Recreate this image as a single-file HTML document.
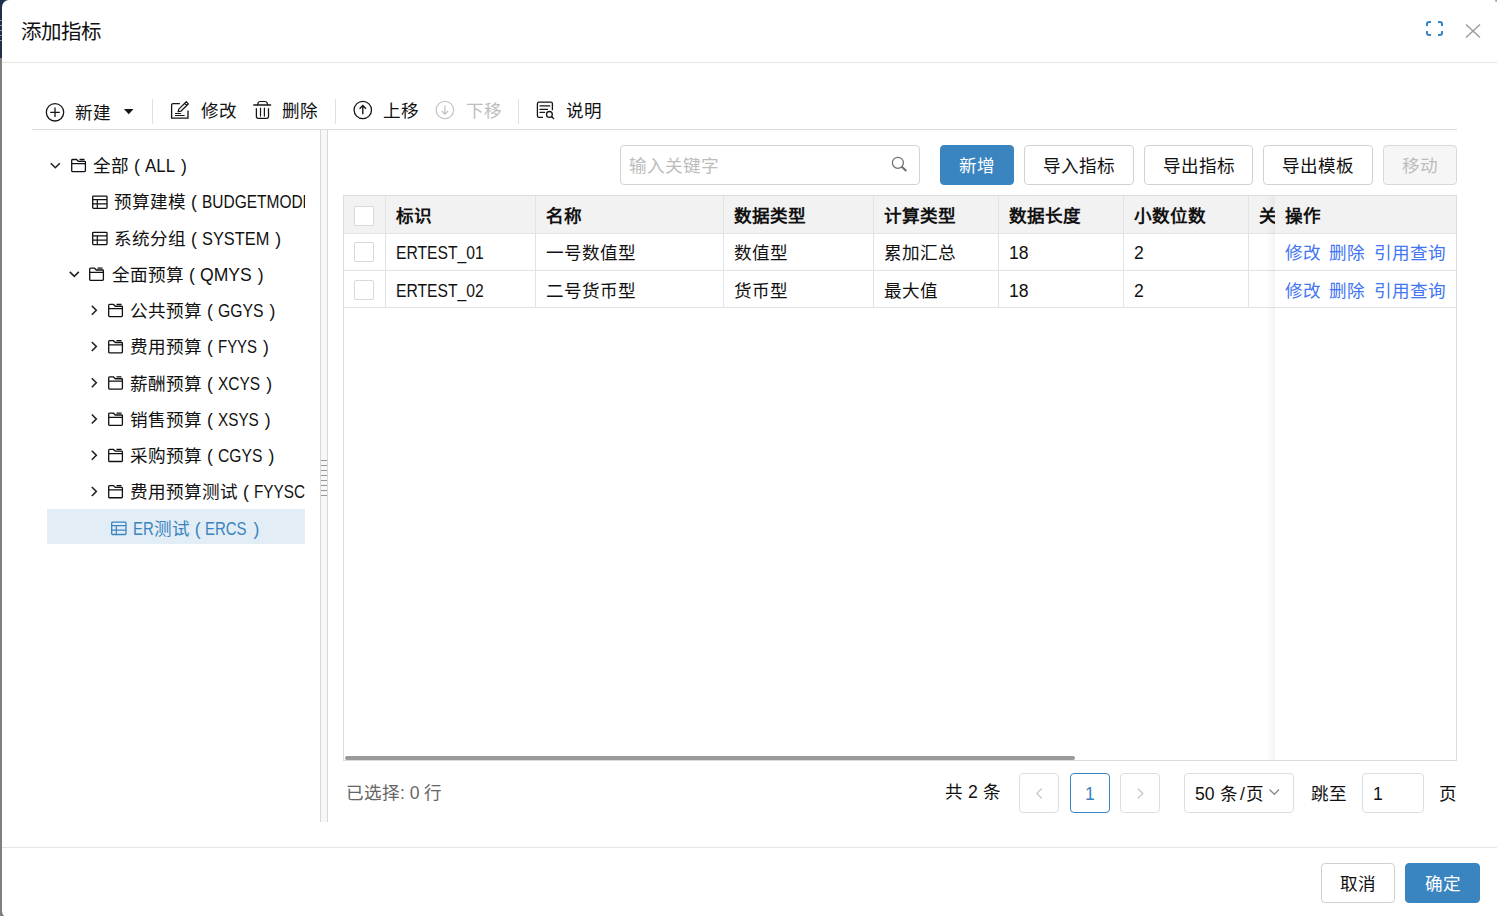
<!DOCTYPE html>
<html lang="zh-CN">
<head>
<meta charset="utf-8">
<style>
*{box-sizing:border-box;margin:0;padding:0}
html,body{width:1497px;height:916px;overflow:hidden;background:#7f7f7f}
body{font-family:"Liberation Sans",sans-serif;font-size:17.6px;color:#111;position:relative}
.abs{position:absolute}
.t{position:absolute;white-space:nowrap;line-height:20px}
.hline{position:absolute;height:1px;background:#e5e5e5}
.vline{position:absolute;width:1px;background:#e0e0e0}
.btn{position:absolute;border:1px solid #d2d2d2;border-radius:4px;background:#fff;text-align:center;line-height:38px;height:40px;padding-top:1px}
.primary{background:#3a84c0;border-color:#3a84c0;color:#fff}
#ov{position:absolute;left:0;top:0;overflow:visible}
.link{color:#4275f3}
.L{display:inline-block;transform-origin:0 0}
</style>
</head>
<body>
<div class="abs" style="left:0;top:0;width:1497px;height:58px;background:#1e2f4b"></div>
<div class="abs" style="left:0;top:20px;width:2px;height:1px;background:#8a8f98"></div>
<div class="abs" style="left:0;top:25px;width:2px;height:1px;background:#8a8f98"></div>
<div class="abs" style="left:0;top:30px;width:2px;height:1px;background:#8a8f98"></div>
<div class="abs" style="left:0;top:35px;width:2px;height:1px;background:#8a8f98"></div>
<div class="abs" style="left:0;top:40px;width:2px;height:1px;background:#8a8f98"></div>
<div class="abs" style="left:1494px;top:0;width:3px;height:3px;background:#1e2f4b"></div>
<div class="abs" style="left:2px;top:0;width:1520px;height:918px;background:#fff;border-top-left-radius:7px;border-bottom-left-radius:7px"></div>
<div class="abs" style="left:1495px;top:0;width:2px;height:1.5px;background:#a5abb5;border-bottom-left-radius:1.5px"></div>
<div class="t" style="left:21px;top:20.5px;font-size:20.5px;line-height:22px">添加指标</div>
<div class="hline" style="left:2px;top:62px;width:1495px"></div>
<div class="t" style="left:75px;top:103px">新建</div>
<div class="vline" style="left:152px;top:99px;height:25px"></div>
<div class="t" style="left:201px;top:101px">修改</div>
<div class="t" style="left:282px;top:101px">删除</div>
<div class="vline" style="left:335px;top:99px;height:25px"></div>
<div class="t" style="left:383px;top:101px">上移</div>
<div class="t" style="left:466px;top:101px;color:#bdbdbd">下移</div>
<div class="vline" style="left:518px;top:99px;height:25px"></div>
<div class="t" style="left:566px;top:101px">说明</div>
<div class="hline" style="left:32px;top:129px;width:1425px;background:#dcdcdc"></div>
<div class="abs" style="left:320px;top:130px;width:8px;height:692px;background:#f7f7f7;border-left:1px solid #d8d8d8;border-right:1px solid #d8d8d8"></div>
<div class="abs" style="left:321px;top:460px;width:6px;height:1px;background:#9097a3"></div>
<div class="abs" style="left:321px;top:465px;width:6px;height:1px;background:#9097a3"></div>
<div class="abs" style="left:321px;top:470px;width:6px;height:1px;background:#9097a3"></div>
<div class="abs" style="left:321px;top:475px;width:6px;height:1px;background:#9097a3"></div>
<div class="abs" style="left:321px;top:480px;width:6px;height:1px;background:#9097a3"></div>
<div class="abs" style="left:321px;top:485px;width:6px;height:1px;background:#9097a3"></div>
<div class="abs" style="left:321px;top:490px;width:6px;height:1px;background:#9097a3"></div>
<div class="abs" style="left:321px;top:495px;width:6px;height:1px;background:#9097a3"></div>
<div class="abs" style="left:0;top:130px;width:305px;height:700px;overflow:hidden">
<div class="t" style="left:93px;top:18.20px;line-height:36.24px;color:#111">全部 ( <span class="L" style="font-size:18.4px;transform:scaleX(0.9183);margin-right:-1.18px">ALL</span> )</div>
<div class="t" style="left:114px;top:54.44px;line-height:36.24px;color:#111">预算建模 ( <span class="L" style="font-size:18.4px;transform:scaleX(0.8417);margin-right:-20.99px">BUDGETMODEL</span> )</div>
<div class="t" style="left:114px;top:90.68px;line-height:36.24px;color:#111">系统分组 ( <span class="L" style="font-size:18.4px;transform:scaleX(0.8896);margin-right:-6.86px">SYSTEM</span> )</div>
<div class="t" style="left:112px;top:126.92px;line-height:36.24px;color:#111">全面预算 ( <span class="L" style="font-size:18.4px;transform:scaleX(0.9565);margin-right:-0.86px">QMYS</span> )</div>
<div class="t" style="left:130px;top:163.16px;line-height:36.24px;color:#111">公共预算 ( <span class="L" style="font-size:18.4px;transform:scaleX(0.8570);margin-right:-6.10px">GGYS</span> )</div>
<div class="t" style="left:130px;top:199.40px;line-height:36.24px;color:#111">费用预算 ( <span class="L" style="font-size:18.4px;transform:scaleX(0.8130);margin-right:-7.48px">FYYS</span> )</div>
<div class="t" style="left:130px;top:235.64px;line-height:36.24px;color:#111">薪酬预算 ( <span class="L" style="font-size:18.4px;transform:scaleX(0.8417);margin-right:-6.43px">XCYS</span> )</div>
<div class="t" style="left:130px;top:271.88px;line-height:36.24px;color:#111">销售预算 ( <span class="L" style="font-size:18.4px;transform:scaleX(0.8322);margin-right:-6.74px">XSYS</span> )</div>
<div class="t" style="left:130px;top:308.12px;line-height:36.24px;color:#111">采购预算 ( <span class="L" style="font-size:18.4px;transform:scaleX(0.8513);margin-right:-6.25px">CGYS</span> )</div>
<div class="t" style="left:130px;top:344.36px;line-height:36.24px;color:#111">费用预算测试 ( <span class="L" style="font-size:18.4px;transform:scaleX(0.8322);margin-right:-10.86px">FYYSCS</span> )</div>
<div class="abs" style="left:47px;top:378.5px;width:258px;height:35.5px;background:#e3edf6"></div>
<div class="t" style="left:133px;top:380.60px;line-height:36.24px;color:#3a84c0"><span class="L" style="font-size:18.4px;transform:scaleX(0.8130);margin-right:-4.78px">ER</span>测试 ( <span class="L" style="font-size:18.4px;transform:scaleX(0.8130);margin-right:-8.06px">ERCS</span> )</div>
</div>
<div class="abs" style="left:620px;top:145px;width:300px;height:40px;border:1px solid #d4d4d4;border-radius:4px"></div>
<div class="t" style="left:629px;top:156px;color:#bcbcbc">输入关键字</div>
<div class="btn primary" style="left:940px;top:145px;width:74px">新增</div>
<div class="btn" style="left:1024px;top:145px;width:110px">导入指标</div>
<div class="btn" style="left:1144px;top:145px;width:109px">导出指标</div>
<div class="btn" style="left:1263px;top:145px;width:110px">导出模板</div>
<div class="btn" style="left:1383px;top:145px;width:74px;background:#f6f6f6;color:#bdbdbd;border-color:#d9d9d9">移动</div>
<div class="abs" style="left:343px;top:195px;width:1114px;height:566px;border:1px solid #dcdcdc"></div>
<div class="abs" style="left:344px;top:196px;width:1112px;height:37px;background:#f2f2f2"></div>
<div class="hline" style="left:344px;top:232.5px;width:1112px;background:#e3e3e3"></div>
<div class="hline" style="left:344px;top:270.3px;width:1112px;background:#e3e3e3"></div>
<div class="hline" style="left:344px;top:307.3px;width:1112px;background:#e3e3e3"></div>
<div class="vline" style="left:385px;top:196px;height:111.5px;background:#e3e3e3"></div>
<div class="vline" style="left:535px;top:196px;height:111.5px;background:#e3e3e3"></div>
<div class="vline" style="left:723px;top:196px;height:111.5px;background:#e3e3e3"></div>
<div class="vline" style="left:873px;top:196px;height:111.5px;background:#e3e3e3"></div>
<div class="vline" style="left:998px;top:196px;height:111.5px;background:#e3e3e3"></div>
<div class="vline" style="left:1123px;top:196px;height:111.5px;background:#e3e3e3"></div>
<div class="vline" style="left:1248px;top:196px;height:111.5px;background:#e3e3e3"></div>
<div class="abs" style="left:354px;top:206px;width:20px;height:20px;border:1px solid #d9d9d9;border-radius:2px;background:#fff"></div>
<div class="abs" style="left:354px;top:242px;width:20px;height:20px;border:1px solid #d9d9d9;border-radius:2px;background:#fff"></div>
<div class="abs" style="left:354px;top:279.5px;width:20px;height:20px;border:1px solid #d9d9d9;border-radius:2px;background:#fff"></div>
<div class="t" style="left:396px;top:205.5px;font-weight:bold">标识</div>
<div class="t" style="left:546px;top:205.5px;font-weight:bold">名称</div>
<div class="t" style="left:734px;top:205.5px;font-weight:bold">数据类型</div>
<div class="t" style="left:884px;top:205.5px;font-weight:bold">计算类型</div>
<div class="t" style="left:1009px;top:205.5px;font-weight:bold">数据长度</div>
<div class="t" style="left:1134px;top:205.5px;font-weight:bold">小数位数</div>
<div class="t" style="left:1259px;top:205.5px;font-weight:bold">关</div>
<div class="t" style="left:396px;top:243px"><span class="L" style="font-size:18.4px;transform:scaleX(0.8513);margin-right:-15.31px">ERTEST_01</span></div>
<div class="t" style="left:546px;top:243px">一号数值型</div>
<div class="t" style="left:734px;top:243px">数值型</div>
<div class="t" style="left:884px;top:243px">累加汇总</div>
<div class="t" style="left:1009px;top:243px">18</div>
<div class="t" style="left:1134px;top:243px">2</div>
<div class="t" style="left:396px;top:281px"><span class="L" style="font-size:18.4px;transform:scaleX(0.8513);margin-right:-15.31px">ERTEST_02</span></div>
<div class="t" style="left:546px;top:281px">二号货币型</div>
<div class="t" style="left:734px;top:281px">货币型</div>
<div class="t" style="left:884px;top:281px">最大值</div>
<div class="t" style="left:1009px;top:281px">18</div>
<div class="t" style="left:1134px;top:281px">2</div>
<div class="abs" style="left:1266px;top:196px;width:9px;height:564px;background:linear-gradient(to right,rgba(0,0,0,0),rgba(0,0,0,0.045))"></div>
<div class="abs" style="left:1275px;top:196px;width:181px;height:564px;background:#fff"></div>
<div class="abs" style="left:1275px;top:196px;width:181px;height:37px;background:#f2f2f2"></div>
<div class="hline" style="left:1275px;top:232.5px;width:181px;background:#e3e3e3"></div>
<div class="hline" style="left:1275px;top:270.3px;width:181px;background:#e3e3e3"></div>
<div class="hline" style="left:1275px;top:307.3px;width:181px;background:#e3e3e3"></div>
<div class="t" style="left:1285px;top:205.5px;font-weight:bold">操作</div>
<div class="t link" style="left:1285px;top:243px">修改</div>
<div class="t link" style="left:1328.5px;top:243px">删除</div>
<div class="t link" style="left:1373.7px;top:243px">引用查询</div>
<div class="t link" style="left:1285px;top:281px">修改</div>
<div class="t link" style="left:1328.5px;top:281px">删除</div>
<div class="t link" style="left:1373.7px;top:281px">引用查询</div>
<div class="abs" style="left:345px;top:755.5px;width:730px;height:4.5px;background:#9a9a9a;border-radius:2px"></div>
<div class="t" style="left:346px;top:783px;color:#666">已选择: 0 行</div>
<div class="t" style="left:945px;top:782px">共 2 条</div>
<div class="btn" style="left:1019px;top:773px;width:40px;height:40px;border-color:#dedede"></div>
<div class="btn" style="left:1070px;top:773px;width:40px;height:40px;border-color:#3a84c0;color:#3a84c0">1</div>
<div class="btn" style="left:1120px;top:773px;width:40px;height:40px;border-color:#dedede"></div>
<div class="btn" style="left:1184px;top:773px;width:110px;height:40px;border-color:#dedede"></div>
<div class="t" style="left:1195px;top:784px">50<span style="margin-left:1px"> </span>条<span style="margin:0 1.5px">/</span>页</div>
<div class="t" style="left:1311px;top:784px">跳至</div>
<div class="btn" style="left:1362px;top:773px;width:62px;height:40px;border-color:#dedede"></div>
<div class="t" style="left:1373px;top:784px">1</div>
<div class="t" style="left:1439px;top:784px">页</div>
<div class="hline" style="left:2px;top:847px;width:1495px"></div>
<div class="btn" style="left:1321px;top:863px;width:74px;height:40px;border-color:#cfcfcf">取消</div>
<div class="btn primary" style="left:1405px;top:863px;width:75px;height:40px">确定</div>
<svg id="ov" width="1497" height="916" viewBox="0 0 1497 916">
<path d="M1427 26V24a2 2 0 0 1 2-2h2 M1438 22h2a2 2 0 0 1 2 2v2 M1442 31v2a2 2 0 0 1-2 2h-2 M1431 35h-2a2 2 0 0 1-2-2v-2" fill="none" stroke="#3584c4" stroke-width="2"/>
<path d="M1466 24.5L1480 37.5 M1480 24.5L1466 37.5" stroke="#9c9c9c" stroke-width="1.5" fill="none"/>
<circle cx="55" cy="112.3" r="8.7" fill="none" stroke="#161616" stroke-width="1.3"/><path d="M55 107.5v9.6 M50.2 112.3h9.6" stroke="#161616" stroke-width="1.3"/>
<path d="M124 109h9.5l-4.75 5.2z" fill="#161616"/>
<path d="M179.9 103.6H173a1.4 1.4 0 0 0-1.4 1.4V118.2H188V110.6" fill="none" stroke="#161616" stroke-width="1.3"/>
<path d="M178.1 111.6l0.7-2.5 7.5-7.4 2.1 2.1-7.5 7.4z M184.6 103.4l2 2" fill="none" stroke="#161616" stroke-width="1.2" stroke-linejoin="round"/>
<path d="M175 113.5h6 M175 115.5h9.6" stroke="#161616" stroke-width="1.2"/>
<path d="M253.3 105h17.8" stroke="#161616" stroke-width="1.5"/>
<path d="M257.4 105l0.8-2.2a2 2 0 0 1 1.8-1.3h5.2a2 2 0 0 1 1.8 1.3l0.8 2.2" fill="none" stroke="#161616" stroke-width="1.2"/>
<path d="M256.4 108.2v8.5a1.6 1.6 0 0 0 1.6 1.6h8.9a1.6 1.6 0 0 0 1.6-1.6V108.2" fill="none" stroke="#161616" stroke-width="1.3"/>
<path d="M260.5 108.2v7.9 M264.4 108.2v7.9" stroke="#161616" stroke-width="1.2" stroke-linecap="round"/>
<circle cx="362.8" cy="110" r="8.7" fill="none" stroke="#161616" stroke-width="1.3"/><path d="M362.8 105.4v8.8 M359.6 108.8l3.2-3.3 3.2 3.3" fill="none" stroke="#161616" stroke-width="1.4"/>
<circle cx="444.9" cy="110" r="8.7" fill="none" stroke="#c6c6c6" stroke-width="1.3"/><path d="M444.9 105.4v8.8 M441.7 110.9l3.2 3.3 3.2-3.3" fill="none" stroke="#c6c6c6" stroke-width="1.4"/>
<path d="M543 117.3H539a1.6 1.6 0 0 1-1.6-1.6V103.7a1.6 1.6 0 0 1 1.6-1.6h11.8a1.6 1.6 0 0 1 1.6 1.6v6.6" fill="none" stroke="#161616" stroke-width="1.3"/>
<path d="M540 105.9h9.7 M540 109.4h7.5 M540 112.4h4.6" stroke="#161616" stroke-width="1.2" stroke-linecap="round"/>
<circle cx="549.4" cy="114.4" r="2.9" fill="none" stroke="#161616" stroke-width="1.3"/><path d="M551.5 116.5l2.1 2" stroke="#161616" stroke-width="1.3" stroke-linecap="round"/>
<path d="M50.8 163.2l4.5 4.5 4.5-4.5" fill="none" stroke="#222" stroke-width="1.6"/>
<path transform="translate(71,158.80)" d="M0.7 12V1.5c0-.5.4-.8.8-.8h4l1.8 1.8h6.3c.5 0 .8.4.8.8V12c0 .5-.4.8-.8.8H1.5c-.5 0-.8-.4-.8-.8z M0.7 4.9h13.7 M8.5 0.7h5" fill="none" stroke="#111" stroke-width="1.3"/>
<g transform="translate(92,195.34)"><rect x="0.7" y="0.7" width="14.3" height="12.3" rx="0.8" fill="none" stroke="#111" stroke-width="1.3"/><path d="M0.7 4.2h14.3 M0.7 8.6h14.3 M5.3 4.2v8.8" fill="none" stroke="#111" stroke-width="1.2"/></g>
<g transform="translate(92,231.58)"><rect x="0.7" y="0.7" width="14.3" height="12.3" rx="0.8" fill="none" stroke="#111" stroke-width="1.3"/><path d="M0.7 4.2h14.3 M0.7 8.6h14.3 M5.3 4.2v8.8" fill="none" stroke="#111" stroke-width="1.2"/></g>
<path d="M69.8 271.92l4.5 4.5 4.5-4.5" fill="none" stroke="#222" stroke-width="1.6"/>
<path transform="translate(89,267.52)" d="M0.7 12V1.5c0-.5.4-.8.8-.8h4l1.8 1.8h6.3c.5 0 .8.4.8.8V12c0 .5-.4.8-.8.8H1.5c-.5 0-.8-.4-.8-.8z M0.7 4.9h13.7 M8.5 0.7h5" fill="none" stroke="#111" stroke-width="1.3"/>
<path d="M91.8 305.76l4.5 4.5-4.5 4.5" fill="none" stroke="#222" stroke-width="1.6"/>
<path transform="translate(108,303.76)" d="M0.7 12V1.5c0-.5.4-.8.8-.8h4l1.8 1.8h6.3c.5 0 .8.4.8.8V12c0 .5-.4.8-.8.8H1.5c-.5 0-.8-.4-.8-.8z M0.7 4.9h13.7 M8.5 0.7h5" fill="none" stroke="#111" stroke-width="1.3"/>
<path d="M91.8 342.0l4.5 4.5-4.5 4.5" fill="none" stroke="#222" stroke-width="1.6"/>
<path transform="translate(108,340.00)" d="M0.7 12V1.5c0-.5.4-.8.8-.8h4l1.8 1.8h6.3c.5 0 .8.4.8.8V12c0 .5-.4.8-.8.8H1.5c-.5 0-.8-.4-.8-.8z M0.7 4.9h13.7 M8.5 0.7h5" fill="none" stroke="#111" stroke-width="1.3"/>
<path d="M91.8 378.23999999999995l4.5 4.5-4.5 4.5" fill="none" stroke="#222" stroke-width="1.6"/>
<path transform="translate(108,376.24)" d="M0.7 12V1.5c0-.5.4-.8.8-.8h4l1.8 1.8h6.3c.5 0 .8.4.8.8V12c0 .5-.4.8-.8.8H1.5c-.5 0-.8-.4-.8-.8z M0.7 4.9h13.7 M8.5 0.7h5" fill="none" stroke="#111" stroke-width="1.3"/>
<path d="M91.8 414.47999999999996l4.5 4.5-4.5 4.5" fill="none" stroke="#222" stroke-width="1.6"/>
<path transform="translate(108,412.48)" d="M0.7 12V1.5c0-.5.4-.8.8-.8h4l1.8 1.8h6.3c.5 0 .8.4.8.8V12c0 .5-.4.8-.8.8H1.5c-.5 0-.8-.4-.8-.8z M0.7 4.9h13.7 M8.5 0.7h5" fill="none" stroke="#111" stroke-width="1.3"/>
<path d="M91.8 450.71999999999997l4.5 4.5-4.5 4.5" fill="none" stroke="#222" stroke-width="1.6"/>
<path transform="translate(108,448.72)" d="M0.7 12V1.5c0-.5.4-.8.8-.8h4l1.8 1.8h6.3c.5 0 .8.4.8.8V12c0 .5-.4.8-.8.8H1.5c-.5 0-.8-.4-.8-.8z M0.7 4.9h13.7 M8.5 0.7h5" fill="none" stroke="#111" stroke-width="1.3"/>
<path d="M91.8 486.96l4.5 4.5-4.5 4.5" fill="none" stroke="#222" stroke-width="1.6"/>
<path transform="translate(108,484.96)" d="M0.7 12V1.5c0-.5.4-.8.8-.8h4l1.8 1.8h6.3c.5 0 .8.4.8.8V12c0 .5-.4.8-.8.8H1.5c-.5 0-.8-.4-.8-.8z M0.7 4.9h13.7 M8.5 0.7h5" fill="none" stroke="#111" stroke-width="1.3"/>
<g transform="translate(111,521.50)"><rect x="0.7" y="0.7" width="14.3" height="12.3" rx="0.8" fill="none" stroke="#3a84c0" stroke-width="1.3"/><path d="M0.7 4.2h14.3 M0.7 8.6h14.3 M5.3 4.2v8.8" fill="none" stroke="#3a84c0" stroke-width="1.2"/></g>
<circle cx="897.9" cy="162.8" r="5.5" fill="none" stroke="#707070" stroke-width="1.25"/><path d="M901.8 166.7l4.5 4.3" stroke="#707070" stroke-width="2.1"/>
<path d="M1041.8 788.5l-5 5 5 5" fill="none" stroke="#c8c8c8" stroke-width="1.3"/>
<path d="M1137.8 788.5l5 5-5 5" fill="none" stroke="#c8c8c8" stroke-width="1.3"/>
<path d="M1269.5 789.5l4.8 4.8 4.8-4.8" fill="none" stroke="#8a8a8a" stroke-width="1.3"/>
</svg>
</body>
</html>
